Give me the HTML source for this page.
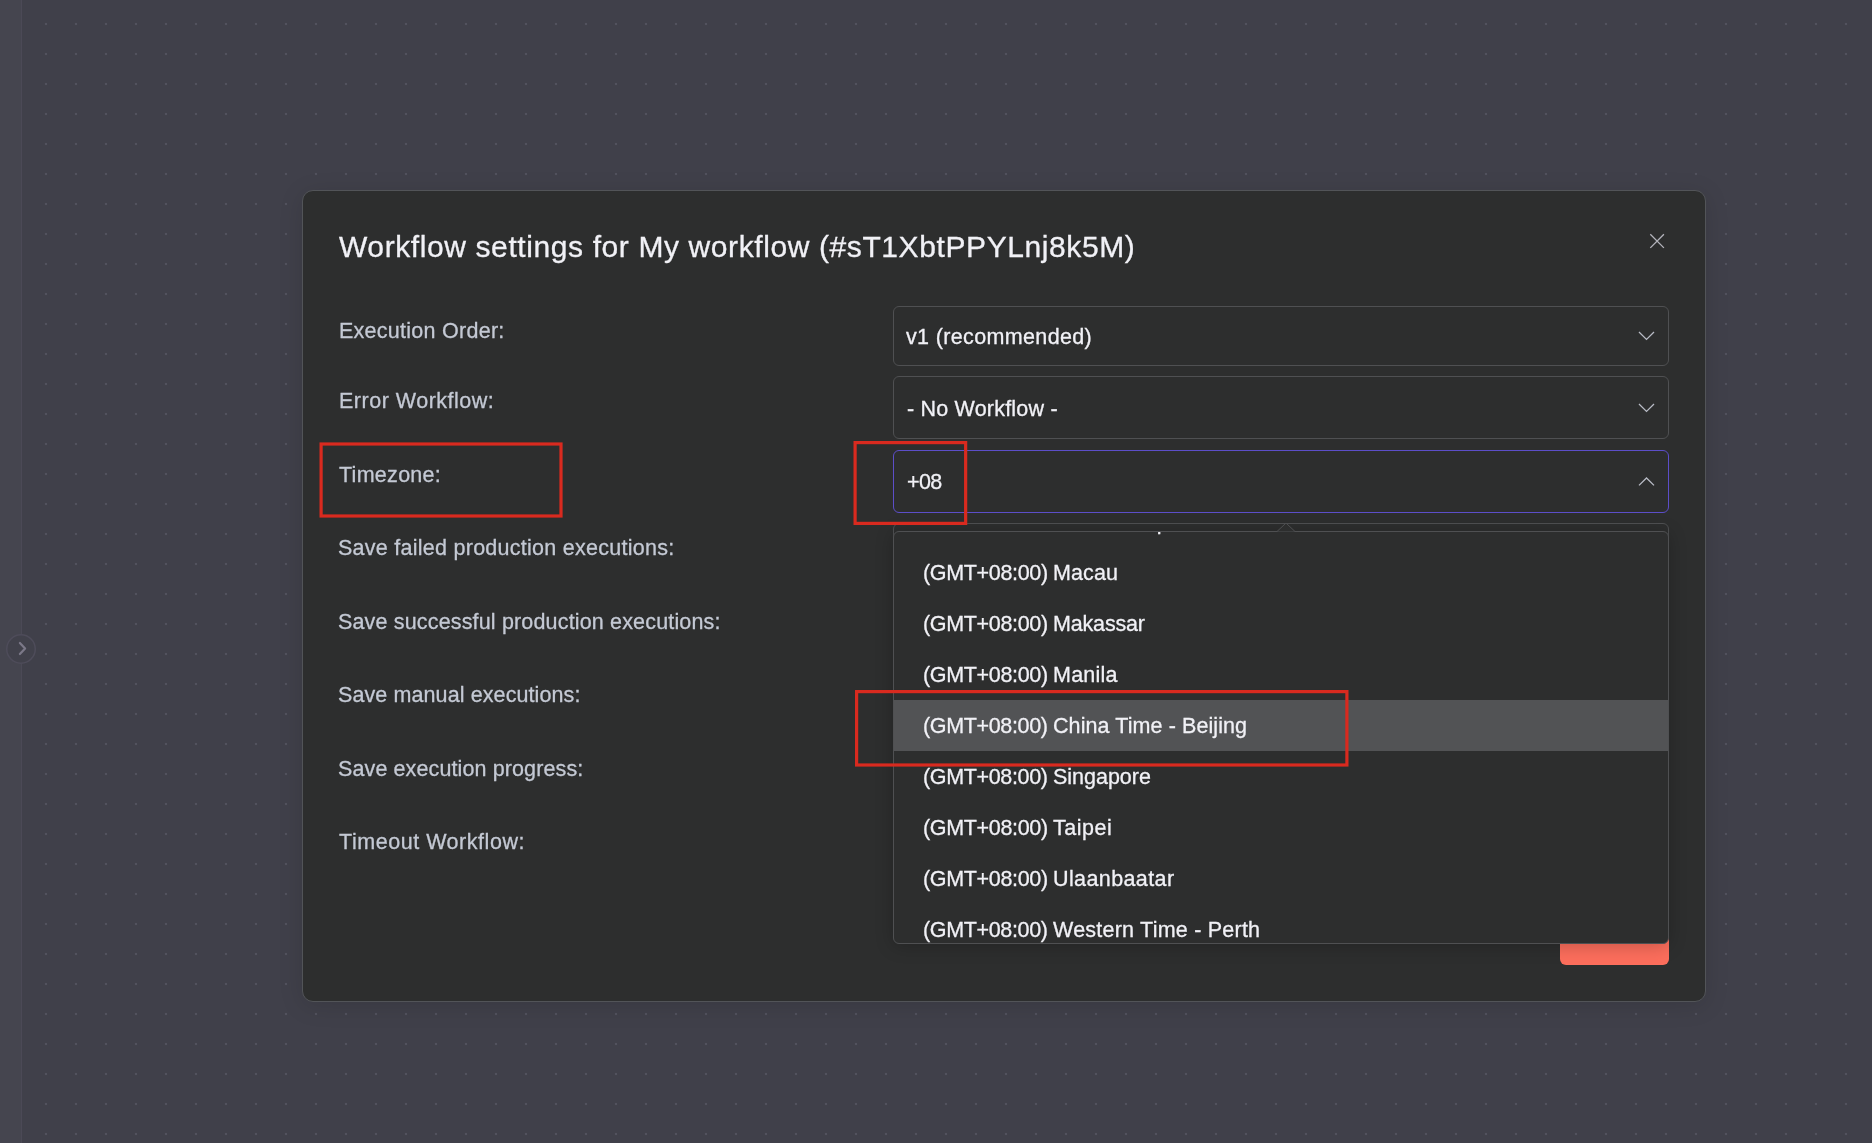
<!DOCTYPE html>
<html lang="en">
<head>
<meta charset="utf-8">
<title>Workflow settings</title>
<style>
  html, body { margin: 0; padding: 0; }
  body {
    width: 1872px; height: 1143px; overflow: hidden; position: relative;
    background-color: #40404a;
    font-family: "Liberation Sans", sans-serif;
    -webkit-font-smoothing: antialiased;
  }
  .abs { position: absolute; }
  /* dotted canvas */
  #canvas {
    left: 0; top: 0; width: 1872px; height: 1143px;
    background-image: radial-gradient(circle, #52525e 0, #52525e 1.05px, rgba(82,82,94,0) 1.6px);
    background-size: 30px 30px;
    background-position: 31px 9px;
  }
  #sidebar { left: 0; top: 0; width: 21px; height: 1143px; background: #45454f; border-right: 1px solid #4b4956; }
  #collapse { left: 6px; top: 634px; width: 30px; height: 30px; }

  #modal {
    left: 302px; top: 190px; width: 1404px; height: 812px; box-sizing: border-box;
    background: #2d2e2e; border: 1px solid #525458; border-radius: 11px;
    box-shadow: 0 4px 24px rgba(0,0,0,0.12);
  }
  .t { position: absolute; white-space: nowrap; line-height: 1; will-change: transform; -webkit-text-stroke: 0.3px currentColor; }
  .title { font-size: 30px; color: #f1f1f6; }
  .label { font-size: 21.5px; color: #c4c9d4; }
  .val   { font-size: 21.5px; color: #f1f1f6; }
  .sel {
    position: absolute; left: 893px; width: 776px; box-sizing: border-box;
    border: 1px solid #4f5052; border-radius: 6px; background: #2d2e2e;
  }
  .sel.focus { border-color: #5c4ec9; }
  .chev { position: absolute; }

  #drop {
    left: 893px; top: 531px; width: 776px; height: 413px; box-sizing: border-box;
    background: #2d2e2e; border: 1px solid #4f5052; border-radius: 6px;
    box-shadow: 0 2px 18px rgba(0,0,0,0.22);
    overflow: hidden;
  }
  #drop .hl { position: absolute; left: 0; top: 168px; width: 774px; height: 51px; background: #525355; }
  #arrow { left: 1277px; top: 522px; width: 18px; height: 10px; }
  #save {
    left: 1560px; top: 911px; width: 109px; height: 54px; border-radius: 6px; background: #fc6e5c;
    color: #ffffff; font-size: 19px; text-align: center; line-height: 54px;
  }
</style>
</head>
<body>
<div id="canvas" class="abs"></div>
<div id="sidebar" class="abs"></div>
<div id="collapse" class="abs">
  <svg width="30" height="30" viewBox="0 0 30 30"><circle cx="15" cy="15" r="14.25" fill="#41414b" stroke="#4e4c5a" stroke-width="1.5"/><path d="M13.9 9 L19.1 14.5 L13.9 20" fill="none" stroke="#7b7888" stroke-width="2.2" stroke-linecap="round" stroke-linejoin="round"/></svg>
</div>

<div id="modal" class="abs"></div>

<svg class="abs" id="close" style="left:1648px; top:232px;" width="18" height="18" viewBox="0 0 18 18"><path d="M2.3 2.3 L15.9 15.9 M15.9 2.3 L2.3 15.9" stroke="#b4b4bc" stroke-width="1.3" fill="none"/></svg>

<!-- selects -->
<div class="sel" id="s1" style="top:306px; height:60px;"></div>
<div class="sel" id="s2" style="top:376px; height:63px;"></div>
<div class="sel focus" id="s3" style="top:450px; height:63px;"></div>
<div class="sel" id="s4" style="top:523px; height:63px;"></div>

<!-- title, labels, select values -->
<span class="t title" id="title" style="left:339.38px; top:232px; letter-spacing:0.599px;">Workflow settings for My workflow (#sT1XbtPPYLnj8k5M)</span>
<span class="t label" id="l1" style="left:339.07px; top:321px; letter-spacing:0.265px;">Execution Order:</span>
<span class="t label" id="l2" style="left:339.07px; top:391px; letter-spacing:0.503px;">Error Workflow:</span>
<span class="t label" id="l3" style="left:339.04px; top:465px; letter-spacing:0.281px;">Timezone:</span>
<span class="t label" id="l4" style="left:338.20px; top:538px; letter-spacing:0.263px;">Save failed production executions:</span>
<span class="t label" id="l5" style="left:338.34px; top:612px; letter-spacing:0.162px;">Save successful production executions:</span>
<span class="t label" id="l6" style="left:338.34px; top:685px; letter-spacing:0.100px;">Save manual executions:</span>
<span class="t label" id="l7" style="left:338.48px; top:759px; letter-spacing:0.114px;">Save execution progress:</span>
<span class="t label" id="l8" style="left:339.04px; top:832px; letter-spacing:0.540px;">Timeout Workflow:</span>
<span class="t val" id="v1" style="left:906.45px; top:327px; letter-spacing:0.353px;">v1 (recommended)</span>
<span class="t val" id="v2" style="left:906.55px; top:399px; letter-spacing:0.201px;">- No Workflow -</span>
<span class="t val" id="v3" style="left:906.76px; top:472px; letter-spacing:-0.610px;">+08</span>

<svg class="chev" style="left:1637px; top:329px;" width="19" height="13" viewBox="0 0 19 13"><path d="M2 3 L9.5 10.4 L17 3" fill="none" stroke="#b9bcc6" stroke-width="1.3"/></svg>
<svg class="chev" style="left:1637px; top:401px;" width="19" height="13" viewBox="0 0 19 13"><path d="M2 3 L9.5 10.4 L17 3" fill="none" stroke="#b9bcc6" stroke-width="1.3"/></svg>
<svg class="chev" style="left:1637px; top:475px;" width="19" height="13" viewBox="0 0 19 13"><path d="M2 10.4 L9.5 3 L17 10.4" fill="none" stroke="#b9bcc6" stroke-width="1.3"/></svg>

<!-- save button (mostly hidden behind dropdown) -->
<div id="save" class="abs">Save</div>

<!-- dropdown -->
<div id="drop" class="abs">
  <div class="hl"></div>
  <span class="t val" id="p0" style="left:28.93px; top:-23px; letter-spacing:-0.337px;">(GMT+08:00) </span>
  <span class="t val" id="n0" style="left:160.00px; top:-20px; letter-spacing:0.000px;">Kuala Lumpur</span>
  <span class="t val" id="p1" style="left:28.93px; top:31px; letter-spacing:-0.337px;">(GMT+08:00) </span>
  <span class="t val" id="n1" style="left:159.26px; top:31px; letter-spacing:0.095px;">Macau</span>
  <span class="t val" id="p2" style="left:28.93px; top:82px; letter-spacing:-0.337px;">(GMT+08:00) </span>
  <span class="t val" id="n2" style="left:159.26px; top:82px; letter-spacing:-0.168px;">Makassar</span>
  <span class="t val" id="p3" style="left:28.93px; top:133px; letter-spacing:-0.337px;">(GMT+08:00) </span>
  <span class="t val" id="n3" style="left:159.26px; top:133px; letter-spacing:0.244px;">Manila</span>
  <span class="t val" id="p4" style="left:28.76px; top:184px; letter-spacing:-0.345px;">(GMT+08:00) </span>
  <span class="t val" id="n4" style="left:158.80px; top:184px; letter-spacing:0.088px;">China Time - Beijing</span>
  <span class="t val" id="p5" style="left:28.76px; top:235px; letter-spacing:-0.351px;">(GMT+08:00) </span>
  <span class="t val" id="n5" style="left:159.20px; top:235px; letter-spacing:-0.019px;">Singapore</span>
  <span class="t val" id="p6" style="left:28.93px; top:286px; letter-spacing:-0.338px;">(GMT+08:00) </span>
  <span class="t val" id="n6" style="left:159.44px; top:286px; letter-spacing:0.527px;">Taipei</span>
  <span class="t val" id="p7" style="left:28.93px; top:337px; letter-spacing:-0.337px;">(GMT+08:00) </span>
  <span class="t val" id="n7" style="left:158.54px; top:337px; letter-spacing:0.397px;">Ulaanbaatar</span>
  <span class="t val" id="p8" style="left:28.93px; top:388px; letter-spacing:-0.345px;">(GMT+08:00) </span>
  <span class="t val" id="n8" style="left:159.33px; top:388px; letter-spacing:0.228px;">Western Time - Perth</span>
</div>
<svg id="arrow" class="abs" width="18" height="10" viewBox="0 0 18 10"><path d="M0 9.5 L9 1 L18 9.5 Z" fill="#2d2e2e" stroke="none"/><path d="M0 9.5 L9 1 L18 9.5" fill="none" stroke="#4f5052" stroke-width="1"/></svg>

<!-- red annotation rectangles -->
<svg id="redrects" class="abs" style="left:0; top:0;" width="1872" height="1143" viewBox="0 0 1872 1143" fill="none" stroke="#d92a1f" stroke-width="3.2">
  <rect id="r1" x="321.1" y="444.0" width="239.9" height="72.0"/>
  <rect id="r2" x="855.1" y="442.6" width="110.55" height="80.8"/>
  <rect id="r3" x="856.6" y="691.6" width="490.3" height="73.4"/>
</svg>
</body>
</html>
